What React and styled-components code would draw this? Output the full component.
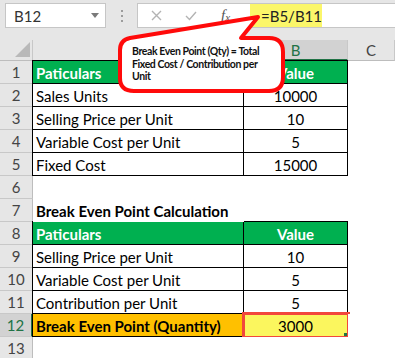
import React from 'react';
import styled, { createGlobalStyle } from 'styled-components';

const GlobalStyle = createGlobalStyle`
  html, body { margin: 0; padding: 0; background: #fff; }
  body { font-family: Lato, "Open Sans", sans-serif; }
`;

const Window = styled.div`
  position: relative;
  width: 395px;
  height: 358px;
  overflow: hidden;
  background: #fff;
`;

const Toolbar = styled.div`
  height: 40px;
  box-sizing: border-box;
  padding: 3px 0 0 5px;
  background: #e6e6e6;
  display: flex;
  align-items: flex-start;
`;

const NameBox = styled.div`
  width: 101px;
  height: 25px;
  box-sizing: border-box;
  padding: 0 6px 0 8px;
  background: #fff;
  border: 1px solid #c6c6c6;
  display: flex;
  align-items: center;
  justify-content: space-between;
  font-size: 15px;
  color: #333;
`;

const Caret = styled.span`
  width: 0;
  height: 0;
  border-left: 4px solid transparent;
  border-right: 4px solid transparent;
  border-top: 5px solid #7a7a7a;
`;

const Grip = styled.div`
  width: 31px;
  height: 25px;
  display: flex;
  flex-direction: column;
  align-items: center;
  justify-content: center;
  gap: 3px;
  span {
    width: 2px;
    height: 2px;
    background: #9c9c9c;
  }
`;

const FormulaBox = styled.div`
  flex: 1;
  height: 25px;
  box-sizing: border-box;
  background: #fff;
  border: 1px solid #c6c6c6;
  border-right: none;
  display: flex;
`;

const Buttons = styled.div`
  width: 112px;
  box-sizing: border-box;
  display: flex;
  align-items: center;
  padding-left: 13px;
  gap: 23px;
`;

const Fx = styled.span`
  font-family: "Liberation Serif", serif;
  font-style: italic;
  font-size: 15px;
  color: #555;
  margin-left: 1px;
  sub {
    font-size: 11px;
    vertical-align: -1px;
  }
`;

const FormulaInput = styled.div`
  width: 72px;
  background: #fbf66a;
  display: flex;
  align-items: center;
  padding-left: 11px;
  box-sizing: border-box;
  font-size: 15px;
  color: #222;
  white-space: nowrap;
`;

const Sheet = styled.div`
  display: grid;
  grid-template-columns: 33px 211px 104px 1fr;
  grid-template-rows: 21px repeat(13, 23px);
  font-size: 15px;
`;

const Corner = styled.div`
  background: #e6e6e6;
  border-right: 1px solid #c8c8c8;
  border-bottom: 1px solid #bdbdbd;
  display: flex;
  align-items: flex-end;
  justify-content: flex-end;
  padding: 0 2px 3px 0;
`;

const ColHeader = styled.div`
  background: ${p => (p.$selected ? '#d2d2d2' : '#e6e6e6')};
  color: ${p => (p.$selected ? '#217346' : '#444')};
  border-right: 1px solid #c8c8c8;
  border-bottom: ${p => (p.$selected ? '2px solid #217346' : '1px solid #bdbdbd')};
  display: flex;
  align-items: center;
  justify-content: center;
`;

const RowHeader = styled.div`
  background: ${p => (p.$selected ? '#d2d2d2' : '#e6e6e6')};
  color: ${p => (p.$selected ? '#217346' : '#444')};
  border-bottom: 1px solid #c8c8c8;
  border-right: ${p => (p.$selected ? '2px solid #217346' : '1px solid #bdbdbd')};
  display: flex;
  align-items: center;
  justify-content: center;
`;

const Cell = styled.div`
  position: relative;
  display: flex;
  align-items: center;
  justify-content: ${p => (p.$center ? 'center' : 'flex-start')};
  padding: 1px 0 0 ${p => (p.$center ? 0 : 3)}px;
  white-space: nowrap;
  overflow: visible;
  z-index: ${p => (p.$spill ? 1 : 0)};
  background: ${p => p.$fill || '#fff'};
  color: ${p => p.$color || '#000'};
  font-weight: ${p => (p.$bold ? 700 : 400)};
  ${p =>
    p.$table &&
    `
    border-right: 1px solid #000;
    border-bottom: 1px solid #000;
  `}
  ${p =>
    p.$table &&
    p.$first &&
    `
    margin-left: -1px;
    border-left: 1px solid #000;
  `}
  ${p =>
    p.$table &&
    p.$top &&
    `
    margin-top: -1px;
    border-top: 1px solid #000;
  `}
`;

const Marked = styled.div`
  position: absolute;
  inset: -2px -3px -3px -2px;
  border: 3px solid #f2473c;
  pointer-events: none;
  &::after {
    content: '';
    position: absolute;
    right: 0;
    bottom: 0;
    width: 3px;
    height: 3px;
    background: #217346;
  }
`;

const Callout = styled.div`
  position: absolute;
  left: 118px;
  top: 14px;
  width: 168px;
  height: 80px;
  pointer-events: none;
  svg {
    position: absolute;
    left: 0;
    top: 0;
    overflow: visible;
  }
`;

const CalloutText = styled.div`
  position: absolute;
  left: 14px;
  top: 31px;
  font-size: 10.5px;
  font-weight: 700;
  line-height: 12.5px;
  color: #111;
  letter-spacing: -0.4px;
  white-space: nowrap;
`;

const rows = [
  { a: 'Paticulars', b: 'Value', head: true, top: true },
  { a: 'Sales Units', b: '10000', table: true },
  { a: 'Selling Price per Unit', b: '10', table: true },
  { a: 'Variable Cost per Unit', b: '5', table: true },
  { a: 'Fixed Cost', b: '15000', table: true },
  {},
  { a: 'Break Even Point Calculation', bold: true, spill: true },
  { a: 'Paticulars', b: 'Value', head: true, top: true },
  { a: 'Selling Price per Unit', b: '10', table: true },
  { a: 'Variable Cost per Unit', b: '5', table: true },
  { a: 'Contribution per Unit', b: '5', table: true },
  { a: 'Break Even Point (Quantity)', b: '3000', table: true, result: true },
  {},
];

function CrossIcon() {
  return (
    <svg width="11" height="11" viewBox="0 0 11 11">
      <path d="M1 1 L10 10 M10 1 L1 10" stroke="#b3b3b3" strokeWidth="1.4" fill="none" />
    </svg>
  );
}

function CheckIcon() {
  return (
    <svg width="12" height="10" viewBox="0 0 12 10">
      <path d="M1 5 L4.5 8.5 L11 1" stroke="#b3b3b3" strokeWidth="1.4" fill="none" />
    </svg>
  );
}

export default function App() {
  return (
    <Window>
      <GlobalStyle />
      <Toolbar>
        <NameBox>
          B12
          <Caret />
        </NameBox>
        <Grip>
          <span />
          <span />
          <span />
        </Grip>
        <FormulaBox>
          <Buttons>
            <CrossIcon />
            <CheckIcon />
            <Fx>
              f<sub>x</sub>
            </Fx>
          </Buttons>
          <FormulaInput>=B5/B11</FormulaInput>
        </FormulaBox>
      </Toolbar>

      <Sheet>
        <Corner>
          <svg width="15" height="15" viewBox="0 0 15 15">
            <polygon points="15,0 15,15 0,15" fill="#b9b9b9" />
          </svg>
        </Corner>
        <ColHeader>A</ColHeader>
        <ColHeader $selected>B</ColHeader>
        <ColHeader>C</ColHeader>

        {rows.map((r, i) => {
          const table = r.table || r.head;
          return (
            <React.Fragment key={i}>
              <RowHeader $selected={i === 11}>{i + 1}</RowHeader>
              <Cell
                $table={table}
                $first
                $top={r.top}
                $fill={r.head ? '#00b050' : r.result ? '#ffc000' : undefined}
                $color={r.head ? '#fff' : undefined}
                $bold={r.head || r.bold || r.result}
                $spill={r.spill}
              >
                {r.a}
              </Cell>
              <Cell
                $table={table}
                $top={r.top}
                $center
                $fill={r.head ? '#00b050' : r.result ? '#fbf65e' : undefined}
                $color={r.head ? '#fff' : undefined}
                $bold={r.head}
              >
                {r.b}
                {r.result && <Marked />}
              </Cell>
              <Cell />
            </React.Fragment>
          );
        })}
      </Sheet>

      <Callout>
        <svg width="168" height="80" viewBox="0 0 168 80">
          <path
            d="M2 64 L2 36 Q2 26 12 24 L140 3 L123 24 L151 24 Q165 24 165 38 L165 63 Q165 77 151 77 L16 77 Q2 77 2 64 Z"
            fill="#fff"
            stroke="#ff0a0a"
            strokeWidth="4"
            strokeLinejoin="round"
          />
        </svg>
        <CalloutText>
          Break Even Point (Qty) = Total
          <br />
          Fixed Cost / Contribution per
          <br />
          Unit
        </CalloutText>
      </Callout>
    </Window>
  );
}
